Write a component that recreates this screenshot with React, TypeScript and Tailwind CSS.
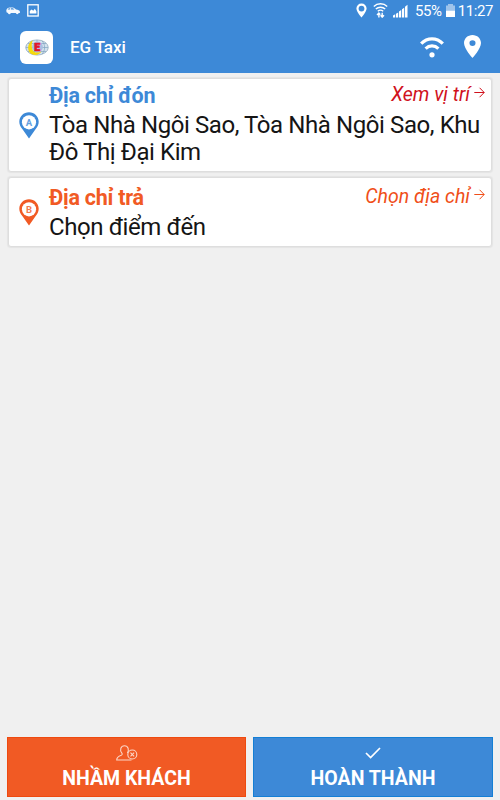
import React from 'react';

interface PinProps {
  label: string;
  color: string;
}

const AddressPin: React.FC<PinProps> = ({ label, color }) => (
  <svg width="20" height="27" viewBox="0 0 20 27" className="shrink-0">
    <path d="M10 0.3C4.6 0.3 0.3 4.5 0.3 9.8c0 3 1.3 5 3.2 7.5L10 26.6l6.5-9.3c1.9-2.5 3.2-4.5 3.2-7.5C19.7 4.5 15.4 0.3 10 0.3z" fill={color} />
    <circle cx="10" cy="10.3" r="7.1" fill="#fff" />
    <text x="10" y="13.8" textAnchor="middle" fontFamily="Roboto, sans-serif" fontWeight="700" fontSize="9.5" fill={color} opacity="0.8">{label}</text>
  </svg>
);

const ArrowIcon = () => (
  <svg width="11" height="11" viewBox="0 0 11 11" fill="none" stroke="currentColor" strokeWidth="1" className="-mt-[4px] shrink-0">
    <path d="M0.3 5.5h9.8M5.6 0.8l4.6 4.7-4.6 4.7" />
  </svg>
);

const MapPinIcon: React.FC<{ className: string }> = ({ className }) => (
  <svg viewBox="5 2 14 20" preserveAspectRatio="none" fill="#fff" className={className}>
    <path fillRule="evenodd" d="M12 2C8.1 2 5 5.1 5 9c0 5.2 7 13 7 13s7-7.8 7-13c0-3.9-3.1-7-7-7zm0 9.5a2.5 2.5 0 1 1 0-5 2.5 2.5 0 0 1 0 5z" />
  </svg>
);

const StatusBar = () => (
  <div className="flex h-[21px] items-center pl-[6px] pr-[7px]">
    <svg width="14" height="8" viewBox="0 0 14 8" className="mt-px">
      <path fillRule="evenodd" d="M0.3 3.2C0.6 1.5 2 0.4 4 0.4h2.7c1.4 0 2.2 1.1 3.3 2 2 .2 3.8.9 3.9 2.1v1.4l-1.2.2a1.5 1.5 0 0 1-2.9 0H4.9a1.5 1.5 0 0 1-2.9-.2L.5 5.2zM1.7 2.6h2.2V1.2c-1.1 0-1.8.5-2.2 1.4zM4.8 2.6h3.6L7 1.3H4.8z" fill="#fff" fillOpacity="0.95" />
    </svg>
    <svg width="12" height="13" viewBox="0 0 12 13" className="ml-[7px]">
      <rect x="0.8" y="0.8" width="10.4" height="11.2" fill="none" stroke="#fff" strokeWidth="1.3" />
      <path d="M2.8 9.6V7l1.8-1.4 1.7 1.2 1.5-2 1.6 2.5v2.3z" fill="#fff" />
    </svg>
    <div className="ml-auto flex items-center">
      <svg width="11" height="15" viewBox="0 0 11 15">
        <path fillRule="evenodd" d="M5.5.5A5 5 0 0 0 .4 5.6C.4 9 5.5 14.5 5.5 14.5S10.6 9 10.6 5.6A5 5 0 0 0 5.5.5zm0 8a2.9 2.9 0 1 1 0-5.8 2.9 2.9 0 0 1 0 5.8z" fill="#fff" />
      </svg>
      <svg width="15" height="15" viewBox="0 0 15 15" fill="none" stroke="#fff" className="ml-[6px]">
        <path d="M.8 3.5C4.4-.1 10.6-.1 14.2 3.5M2.8 6c2.6-2.4 6.8-2.4 9.4 0M4.8 8.2c1.6-1.3 3.8-1.3 5.4 0" strokeWidth="1.4" />
        <path d="M5.9 14.5V10.2M4 12l1.9-2 1.4 1.6M9.2 9.8v4.2M7.6 12.2l1.6 1.9 1.8-1.9" strokeWidth="1.4" />
      </svg>
      <svg width="15" height="14" viewBox="0 0 15 14" fill="#fff" className="ml-[5px]">
        <path d="M0 13.5v-2l2.2-1.2v3.2zM3 13.5V9.8l2.2-1.4v5.1zM6 13.5V7.6l2.2-1.5v7.4zM9 13.5V5.3l2.2-1.5v9.7zM12 13.5V2.8l2.5-2v12.7z" />
      </svg>
      <span className="ml-[7px] pt-px text-[15px] leading-none tracking-[-0.4px] text-white">55%</span>
      <svg width="9" height="13" viewBox="0 0 9 13" className="ml-[4px]">
        <path d="M0 1.5h2V0h5v1.5h2V6.5H0z" fill="#fff" opacity="0.5" />
        <path d="M0 6.5h9V13H0z" fill="#fff" />
      </svg>
      <span className="ml-[3px] pt-px text-[15px] leading-none tracking-[-0.4px] text-white">11:27</span>
    </div>
  </div>
);

const AppLogo = () => (
  <div className="flex h-[33px] w-[33px] items-center justify-center rounded-[6px] bg-white">
    <svg width="24" height="17" viewBox="0 0 24 17">
      <ellipse cx="12" cy="8.5" rx="11.3" ry="7.6" fill="#d3e2ee" stroke="#8aa4b8" strokeWidth="0.7" />
      <path d="M1 8.5h22M3 4.5h18M3 12.5h18M12 1v15M17 1.8c3.5 4 3.5 9.4 0 13.4M7 1.8c-3.5 4-3.5 9.4 0 13.4" fill="none" stroke="#7fa3c0" strokeWidth="0.7" />
      <circle cx="12.5" cy="8" r="5.4" fill="#a9bfe2" />
      <path d="M8 1.3C1.8 3.6 1.5 13.4 7.5 15.6c4 1.2 7.5-.4 8.8-3-3 1.6-7.4 1.2-8.7-1.7C6.2 7.7 6.5 3.6 8 1.3z" fill="#f6d90c" />
      <text x="12.3" y="11.8" textAnchor="middle" fontFamily="Roboto, sans-serif" fontWeight="900" fontSize="10.5" fill="#e3152b" stroke="#e3152b" strokeWidth="0.7">E</text>
    </svg>
  </div>
);

const Header = () => (
  <header className="h-[73px] shrink-0 bg-[#3d89d7]">
    <StatusBar />
    <div className="flex h-[52px] items-center pl-[20px] pr-[19px]">
      <AppLogo />
      <h1 className="ml-[17px] pt-px text-[17px] font-medium leading-none tracking-[-0.1px] text-white">EG Taxi</h1>
      <svg width="24" height="22" viewBox="0 0 24 22" fill="none" stroke="#fff" className="-mt-px ml-auto">
        <path d="M1.2 7.6C7.3 1.2 16.7 1.2 22.8 7.6" strokeWidth="3.2" />
        <path d="M5.6 12.6c3.7-3.6 9.1-3.6 12.8 0" strokeWidth="3.2" />
        <circle cx="12" cy="18.8" r="2.6" fill="#fff" stroke="none" />
      </svg>
      <MapPinIcon className="-mt-[2px] ml-[20px] h-[23px] w-[17px]" />
    </div>
  </header>
);

interface AddressCardProps {
  label: string;
  title: string;
  address: string;
  action: string;
  color: string;
  className: string;
  titleClass: string;
  actionClass: string;
}

const AddressCard: React.FC<AddressCardProps> = ({ label, title, address, action, color, className, titleClass, actionClass }) => (
  <section className={`flex items-start rounded-[3px] border border-[#dedede] bg-white pl-[10px] pr-[6px] shadow-[0_0_1px_1px_#e4e4e4] ${className}`}>
    <div className="self-center">
      <AddressPin label={label} color={color} />
    </div>
    <div className="ml-[10px] min-w-0 flex-1">
      <div className="flex h-[33px] justify-between">
        <h2 className={`pt-[3px] text-[21.5px] font-bold leading-[28px] tracking-[-0.25px] ${titleClass}`}>{title}</h2>
        <button className={`flex h-[30px] items-center gap-[4px] text-[19.5px] italic ${actionClass}`}>
          <span className="pt-[2px]">{action}</span>
          <ArrowIcon />
        </button>
      </div>
      <p className="whitespace-pre text-[24px] leading-[27px] tracking-[-0.41px] text-[#151515]">{address}</p>
    </div>
  </section>
);

const Footer = () => (
  <footer className="mt-auto grid h-[63px] grid-cols-[239px_240px] gap-[7px] pb-[3px] pl-[7px]">
    <button className="flex flex-col items-center border border-[#ee4a10] bg-[#f15a24] pt-[7px] text-white">
      <svg width="22" height="16" viewBox="0 0 22 16" fill="none" stroke="#fff" strokeOpacity="0.75" strokeWidth="1.1">
        <path d="M15.5 15H.7c0-3 1.8-3.9 4.6-4.8 1.1-.4 1.2-1.4.4-2.4C3.6 5.2 4.6.7 8.5.7s4.800 4.500 2.800 7.100" />
        <circle cx="16.3" cy="9.5" r="4.5" />
        <path d="M14.5 7.7l3.6 3.6M18.1 7.7l-3.6 3.6" />
      </svg>
      <span className="mt-[7px] text-[19.5px] font-bold leading-[22px]">NHẦM KHÁCH</span>
    </button>
    <button className="flex flex-col items-center border border-[#147fd5] bg-[#3d89d7] pt-[9px] text-white">
      <svg width="16" height="12" viewBox="0 0 16 12" fill="none" stroke="#fff" strokeWidth="1.7">
        <path d="M1 6l4.6 4.6L15 1" />
      </svg>
      <span className="mt-[9px] text-[19.5px] font-bold leading-[22px]">HOÀN THÀNH</span>
    </button>
  </footer>
);

export default function App() {
  return (
    <div className="flex h-[800px] w-[500px] flex-col overflow-hidden bg-[#f0f0f0] font-['Roboto',sans-serif]">
      <Header />
      <main className="flex flex-col gap-[5px] px-[8px] pt-[5px]">
        <AddressCard
          label="A"
          title="Địa chỉ đón"
          address={'Tòa Nhà Ngôi Sao, Tòa Nhà Ngôi Sao, Khu\nĐô Thị Đại Kim'}
          action="Xem vị trí"
          color="#3d89d7"
          className="h-[94px]"
          titleClass="text-[#3d89d7]"
          actionClass="text-[#d0111c]"
        />
        <AddressCard
          label="B"
          title="Địa chỉ trả"
          address="Chọn điểm đến"
          action="Chọn địa chỉ"
          color="#f15a24"
          className="h-[70px] pb-[3px] pt-[3px]"
          titleClass="text-[#f15a24]"
          actionClass="text-[#f04e18]"
        />
      </main>
      <Footer />
    </div>
  );
}
